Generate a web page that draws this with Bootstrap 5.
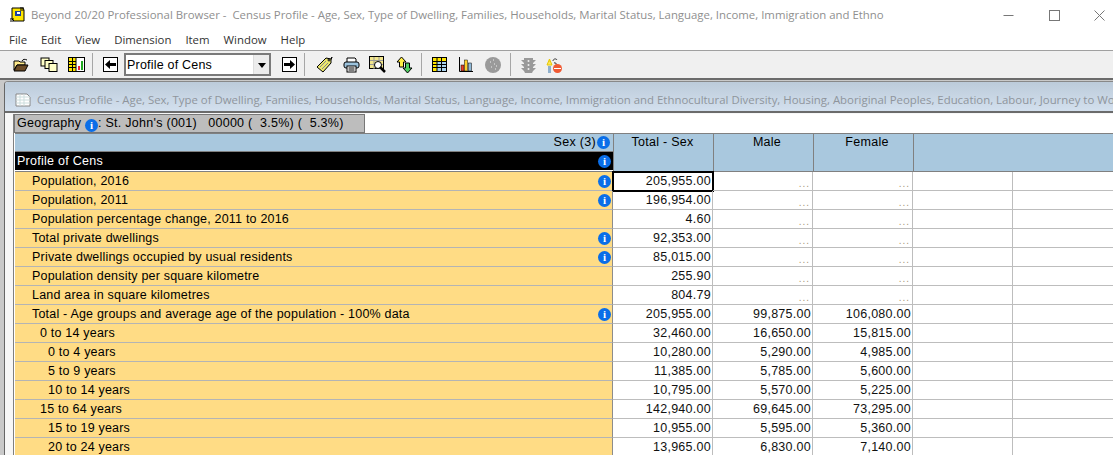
<!doctype html>
<html><head><meta charset="utf-8">
<link href="https://cdn.jsdelivr.net/npm/bootstrap@5.3.0/dist/css/bootstrap.min.css" rel="stylesheet">
<style>
html,body{margin:0;height:455px;overflow:hidden;background:#fff}
body{font-family:"Liberation Sans",Arial,sans-serif;font-size:12.5px;letter-spacing:.2px;color:#000}
.ttl{height:30px;padding-left:10px;padding-right:8px;font-family:"Open Sans","Noto Sans",sans-serif;font-size:11.4px;letter-spacing:0;color:#8f8f8f;white-space:pre}
.ttl .ttxt{margin-left:5px;flex:1;overflow:hidden}
.wbs{gap:34.5px}
.mnu{height:20px;padding-left:9px;gap:14px;font-family:"Open Sans","Noto Sans",sans-serif;font-size:11.4px;letter-spacing:0;color:#333}
.tbar{background:#f0f0f0;border-top:1px solid #a0a0a0;border-bottom:2px solid #6b6b6b;padding-left:13px;box-sizing:content-box;height:27px}
.tbar svg{display:block;flex:none}
.tsep{width:1px;height:23px;background:#a6a6a6;flex:none}
.tcombo{width:147px;height:23px;border:2px solid #7a7a7a;background:#fff;padding-left:1px;position:relative;flex:none;line-height:21px}
.tarrow{position:absolute;right:0;top:0;bottom:0;width:16px;background:#ececec;border-left:1px solid #ddd}
.tarrow::after{content:"";position:absolute;left:4px;top:8px;border:4px solid transparent;border-top:5px solid #000;border-bottom:0}
.navb{width:15px;height:15px;border:1px solid #000;background:#fff;flex:none}
.workarea{background:#c9c9c9;padding:1px 0 0 4px;height:375px}
.docw{background:#f7f7f7;height:100%;border-left:1px solid #666;border-top:1px solid #888;border-top-left-radius:4px;overflow:hidden}
.dttl{height:23px;padding-top:6px;background:linear-gradient(#bccbda,#d3e0ee);border-bottom:2px solid #6b6b6b;box-sizing:content-box;padding-left:10px;font-family:"Open Sans","Noto Sans",sans-serif;font-size:11.4px;letter-spacing:0;color:#8f959c;white-space:nowrap;overflow:hidden}
.dttl svg{flex:none;margin-right:6px}
.dbody{background:#fff;margin-left:8px;height:100%;border-left:1px solid #808080}
.geo{width:351px;height:19px;margin-top:1px;background:#bdbdbd;border:1px solid #777;line-height:17px;padding-left:2px;white-space:pre;letter-spacing:.27px}
.infoi{display:inline-block;width:13px;height:13px;border-radius:50%;background:#0a6ee8;color:#fff;font:bold 11px/13px "Liberation Serif",serif;letter-spacing:0;text-align:center;vertical-align:-2px;flex:none}
.ghead{display:flex;height:37px;margin-left:1px;border-top:1px solid #808080;border-bottom:1px solid #808080;box-sizing:content-box}
.gleft{width:598px;flex:none}
.sexh{height:18px;background:#a9c8de;border-bottom:1px solid #808080;display:flex;justify-content:flex-end;align-items:center;padding-right:3px;gap:1px;letter-spacing:.3px}
.prof{height:19px;background:#000;color:#fff;border-bottom:1px solid #fff;display:flex;justify-content:space-between;align-items:center;padding:0 2px;letter-spacing:.27px}
.hcol{width:100px;flex:none;background:#a9c8de;border-left:1px solid #808080;text-align:center;line-height:15px;padding-top:1px;padding-right:2px;letter-spacing:.27px}
.hshift{padding-left:7px;padding-right:0}
.hrest{flex:1;background:#a9c8de;border-left:1px solid #808080}
.grow{display:grid;grid-template-columns:598px 100px 100px 100px 100px 1fr;height:19px;margin-left:1px;white-space:nowrap}
.lab{background:#ffdc85;border-bottom:1px solid #b4b4b4;border-right:1px solid #8c8c8c;display:flex;justify-content:space-between;align-items:center;padding-right:1px;line-height:18px}
.cel{border-right:1px solid #bdbdbd;border-bottom:1px solid #bdbdbd;text-align:right;padding-right:1px;line-height:18px;color:#111;letter-spacing:.27px}
.dots{color:#a89878;font-size:10px;line-height:24px;letter-spacing:1px;padding-right:2px;overflow:hidden}
.cur{outline:2px solid #000;outline-offset:-1px}
.l0{padding-left:17px}.l1{padding-left:25px}.l2{padding-left:33px}
.endc{border-right:0}
</style></head>
<body>
<div class="d-flex align-items-center ttl">
<svg width="16" height="16" viewBox="0 0 16 16"><path d="M2 1h11l1 2v11H4l-2-2z" fill="#ffe600" stroke="#000"/><path d="M5 4h6v5H5z" fill="#1a3fa0"/><path d="M7 5h3v2H7z" fill="#fff"/><path d="M0 12h4M0 14h4M11 0v4M13 0v4" stroke="#000" stroke-width="1"/></svg>
<div class="ttxt">Beyond 20/20 Professional Browser -  Census Profile - Age, Sex, Type of Dwelling, Families, Households, Marital Status, Language, Income, Immigration and Ethno</div>
<div class="d-flex align-items-center wbs">
<svg width="11" height="11"><path d="M0.5 5.500h10" stroke="#777"/></svg>
<svg width="11" height="11"><rect x=".5" y=".5" width="10" height="10" fill="none" stroke="#777"/></svg>
<svg width="11" height="11"><path d="M.5.5l10 10M10.500.5l-10 10" stroke="#777"/></svg>
</div></div>
<div class="d-flex align-items-center mnu"><span>File</span><span>Edit</span><span>View</span><span>Dimension</span><span>Item</span><span>Window</span><span>Help</span></div>
<div class="d-flex align-items-center tbar">
<svg width="16" height="14" viewBox="0 0 16 14"><path d="M1 3h5l1 1h5v3H4L1 12z" fill="#ffe98a" stroke="#000"/><path d="M1 13l3-6h11l-3 6z" fill="#6b4a25" stroke="#000"/><path d="M9 3c1-2 3-2 5-1" stroke="#000" fill="none"/></svg>
<svg style="margin-left:11px" width="18" height="16" viewBox="0 0 18 16"><rect x="1" y="1" width="8" height="8" fill="#ffffc8" stroke="#000"/><rect x="5" y="3.500" width="8" height="8" fill="#ffffc8" stroke="#000"/><rect x="9" y="6.500" width="8" height="8" fill="#ffffc8" stroke="#000"/></svg>
<svg style="margin-left:10px" width="17" height="15" viewBox="0 0 17 15"><rect x=".5" y=".5" width="16" height="14" fill="#fff" stroke="#000"/><rect x="1" y="1" width="7" height="13" fill="#ffe600"/><path d="M4.500 1v13M1 4.500h7M1 7.500h7M1 10.500h7M8 1v13" stroke="#000"/><path d="M11 13V9" stroke="#e23" stroke-width="2"/><path d="M14 13V4" stroke="#2a2" stroke-width="2"/></svg>
<div class="tsep" style="margin-left:7px"></div>
<div class="navb d-flex align-items-center justify-content-center" style="margin-left:10px"><svg width="11" height="9"><path d="M0 4.500L5 0v3h6v3H5v3z" fill="#000"/></svg></div>
<div class="tcombo" style="margin-left:6px">Profile of Cens<span class="tarrow"></span></div>
<div class="navb d-flex align-items-center justify-content-center" style="margin-left:11px"><svg width="11" height="9"><path d="M11 4.500L6 0v3H0v3h6v3z" fill="#000"/></svg></div>
<div class="tsep" style="margin-left:7px"></div>
<svg style="margin-left:11px" width="18" height="17" viewBox="0 0 18 17"><path d="M1 11L10 2l5 1 1-2-1 3 0 3-8 9z" fill="#ece76e" stroke="#000"/><path d="M4 11l6-6M6 13l6-6" stroke="#888"/><circle cx="13" cy="4" r="1" fill="#fff" stroke="#000"/></svg>
<svg style="margin-left:9px" width="17" height="16" viewBox="0 0 17 16"><path d="M4 5V1h8l1 1v3" fill="#fff" stroke="#000"/><rect x="1" y="5" width="15" height="6" rx="2" fill="#9cc3dd" stroke="#000"/><rect x="4" y="9" width="9" height="6" fill="#fff" stroke="#000"/><path d="M5.500 11h6M5.500 13h6" stroke="#000"/></svg>
<svg style="margin-left:9px" width="18" height="17" viewBox="0 0 18 17"><rect x=".5" y=".5" width="14" height="12" fill="#f2e68c" stroke="#000"/><path d="M5 1v12M10 1v12M1 4.500h13M1 8.500h13" stroke="#999"/><circle cx="9" cy="9" r="3.500" fill="#fff" stroke="#000"/><path d="M11 11l5 5" stroke="#000" stroke-width="2.500"/></svg>
<svg style="margin-left:9px" width="17" height="18" viewBox="0 0 17 18"><path d="M5.500 1L10 6H7.500v5h-4V6H1z" fill="#ffee44" stroke="#000"/><path d="M11.500 17L7 12h2.500V7h4v5H16z" fill="#4fce62" stroke="#000"/></svg>
<div class="tsep" style="margin-left:8px"></div>
<svg style="margin-left:10px" width="15" height="15" viewBox="0 0 15 15"><rect x=".5" y=".5" width="14" height="14" fill="#fff" stroke="#000"/><rect x="1" y="1" width="13" height="3" fill="#ffe600"/><rect x="1" y="4" width="4" height="10" fill="#ffe600"/><rect x="5" y="4" width="9" height="10" fill="#a9d3ee"/><path d="M5 1v13M9.500 1v13M1 4.500h13M1 7.500h13M1 10.500h13" stroke="#000"/></svg>
<svg style="margin-left:12px" width="14" height="15" viewBox="0 0 14 15"><path d="M.5 0v14.500H14" stroke="#000" fill="none"/><rect x="2" y="8" width="3" height="6" fill="#e8402a" stroke="#000" stroke-width=".5"/><rect x="5.500" y="3" width="3" height="11" fill="#ffcf2a" stroke="#000" stroke-width=".5"/><rect x="9.500" y="6" width="3" height="8" fill="#8fb8d6" stroke="#000" stroke-width=".5"/></svg>
<svg style="margin-left:12px" width="16" height="16" viewBox="0 0 16 16"><circle cx="8" cy="8" r="8" fill="#9a9a9a"/><path d="M5 5h1M8 3h1M9 7h1M11 9h1M6 10h1M10 12h1" stroke="#eee"/></svg>
<div class="tsep" style="margin-left:9px"></div>
<svg style="margin-left:9px" width="17" height="16" viewBox="0 0 17 16"><path d="M1 3h3V1h9v2h3l-3 3v1h3l-3 3v1h3l-3 3-1 2H5l-1-2-3-3h3v-1L1 7h3V6z" fill="#999"/><circle cx="8.500" cy="4" r="1" fill="#eee"/><circle cx="8.500" cy="8" r="1" fill="#eee"/><circle cx="8.500" cy="12" r="1" fill="#eee"/></svg>
<svg style="margin-left:9px" width="17" height="18" viewBox="0 0 17 18"><path d="M1 9l2.500-6L6 9zM3 5h1" fill="#ffe95a" stroke="#e6c800"/><path d="M7 5c0-2 3-3 4-1M9 6c-1 2 1 2 2 2" fill="none" stroke="#333"/><rect x="2" y="10" width="3" height="7" fill="#8fb0cc"/><circle cx="11.500" cy="12.500" r="4.500" fill="#f05a33"/><path d="M8 12.500h7" stroke="#fff"/></svg>
</div>
<div class="workarea"><div class="docw">
<div class="d-flex align-items-center dttl">
<svg width="16" height="15" viewBox="0 0 16 15"><path d="M1 2h11l3 3v9H1z" fill="#fff" stroke="#888"/><path d="M1 5h14M1 8h14M1 11h14M5 2v12M9 2v12" stroke="#cdd"/></svg>
<span>Census Profile - Age, Sex, Type of Dwelling, Families, Households, Marital Status, Language, Income, Immigration and Ethnocultural Diversity, Housing, Aboriginal Peoples, Education, Labour, Journey to Work</span></div>
<div class="dbody">
<div class="geo">Geography <span class="infoi">i</span>: St. John's (001)   00000 (  3.5%) (  5.3%)</div>
<div class="ghead">
<div class="gleft"><div class="sexh">Sex (3)<span class="infoi">i</span></div><div class="prof">Profile of Cens<span class="infoi">i</span></div></div>
<div class="hcol">Total - Sex</div><div class="hcol hshift">Male</div><div class="hcol hshift">Female</div><div class="hrest"></div>
</div>
<div class="grow"><div class="lab l0">Population, 2016<span class="infoi">i</span></div><div class="cel cur">205,955.00</div><div class="cel dots">...</div><div class="cel dots">...</div><div class="cel"></div><div class="cel endc"></div></div>
<div class="grow"><div class="lab l0">Population, 2011<span class="infoi">i</span></div><div class="cel">196,954.00</div><div class="cel dots">...</div><div class="cel dots">...</div><div class="cel"></div><div class="cel endc"></div></div>
<div class="grow"><div class="lab l0">Population percentage change, 2011 to 2016</div><div class="cel">4.60</div><div class="cel dots">...</div><div class="cel dots">...</div><div class="cel"></div><div class="cel endc"></div></div>
<div class="grow"><div class="lab l0">Total private dwellings<span class="infoi">i</span></div><div class="cel">92,353.00</div><div class="cel dots">...</div><div class="cel dots">...</div><div class="cel"></div><div class="cel endc"></div></div>
<div class="grow"><div class="lab l0">Private dwellings occupied by usual residents<span class="infoi">i</span></div><div class="cel">85,015.00</div><div class="cel dots">...</div><div class="cel dots">...</div><div class="cel"></div><div class="cel endc"></div></div>
<div class="grow"><div class="lab l0">Population density per square kilometre</div><div class="cel">255.90</div><div class="cel dots">...</div><div class="cel dots">...</div><div class="cel"></div><div class="cel endc"></div></div>
<div class="grow"><div class="lab l0">Land area in square kilometres</div><div class="cel">804.79</div><div class="cel dots">...</div><div class="cel dots">...</div><div class="cel"></div><div class="cel endc"></div></div>
<div class="grow"><div class="lab l0">Total - Age groups and average age of the population - 100% data<span class="infoi">i</span></div><div class="cel">205,955.00</div><div class="cel">99,875.00</div><div class="cel">106,080.00</div><div class="cel"></div><div class="cel endc"></div></div>
<div class="grow"><div class="lab l1">0 to 14 years</div><div class="cel">32,460.00</div><div class="cel">16,650.00</div><div class="cel">15,815.00</div><div class="cel"></div><div class="cel endc"></div></div>
<div class="grow"><div class="lab l2">0 to 4 years</div><div class="cel">10,280.00</div><div class="cel">5,290.00</div><div class="cel">4,985.00</div><div class="cel"></div><div class="cel endc"></div></div>
<div class="grow"><div class="lab l2">5 to 9 years</div><div class="cel">11,385.00</div><div class="cel">5,785.00</div><div class="cel">5,600.00</div><div class="cel"></div><div class="cel endc"></div></div>
<div class="grow"><div class="lab l2">10 to 14 years</div><div class="cel">10,795.00</div><div class="cel">5,570.00</div><div class="cel">5,225.00</div><div class="cel"></div><div class="cel endc"></div></div>
<div class="grow"><div class="lab l1">15 to 64 years</div><div class="cel">142,940.00</div><div class="cel">69,645.00</div><div class="cel">73,295.00</div><div class="cel"></div><div class="cel endc"></div></div>
<div class="grow"><div class="lab l2">15 to 19 years</div><div class="cel">10,955.00</div><div class="cel">5,595.00</div><div class="cel">5,360.00</div><div class="cel"></div><div class="cel endc"></div></div>
<div class="grow"><div class="lab l2">20 to 24 years</div><div class="cel">13,965.00</div><div class="cel">6,830.00</div><div class="cel">7,140.00</div><div class="cel"></div><div class="cel endc"></div></div>
</div>
</div></div>
<script src="https://cdn.jsdelivr.net/npm/bootstrap@5.3.0/dist/js/bootstrap.bundle.min.js"></script>
</body></html>
